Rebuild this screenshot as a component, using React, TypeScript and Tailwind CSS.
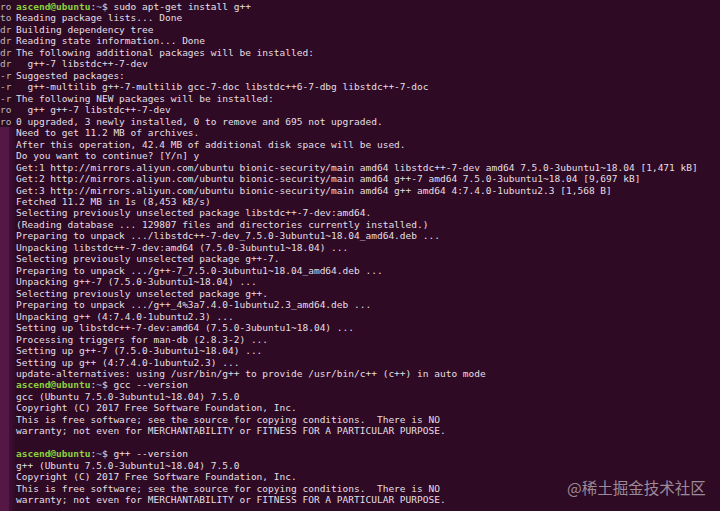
import React from "react";

const lines: string[] = [
  "$P sudo apt-get install g++",
  "Reading package lists... Done",
  "Building dependency tree",
  "Reading state information... Done",
  "The following additional packages will be installed:",
  "  g++-7 libstdc++-7-dev",
  "Suggested packages:",
  "  g++-multilib g++-7-multilib gcc-7-doc libstdc++6-7-dbg libstdc++-7-doc",
  "The following NEW packages will be installed:",
  "  g++ g++-7 libstdc++-7-dev",
  "0 upgraded, 3 newly installed, 0 to remove and 695 not upgraded.",
  "Need to get 11.2 MB of archives.",
  "After this operation, 42.4 MB of additional disk space will be used.",
  "Do you want to continue? [Y/n] y",
  "Get:1 http://mirrors.aliyun.com/ubuntu bionic-security/main amd64 libstdc++-7-dev amd64 7.5.0-3ubuntu1~18.04 [1,471 kB]",
  "Get:2 http://mirrors.aliyun.com/ubuntu bionic-security/main amd64 g++-7 amd64 7.5.0-3ubuntu1~18.04 [9,697 kB]",
  "Get:3 http://mirrors.aliyun.com/ubuntu bionic-security/main amd64 g++ amd64 4:7.4.0-1ubuntu2.3 [1,568 B]",
  "Fetched 11.2 MB in 1s (8,453 kB/s)",
  "Selecting previously unselected package libstdc++-7-dev:amd64.",
  "(Reading database ... 129807 files and directories currently installed.)",
  "Preparing to unpack .../libstdc++-7-dev_7.5.0-3ubuntu1~18.04_amd64.deb ...",
  "Unpacking libstdc++-7-dev:amd64 (7.5.0-3ubuntu1~18.04) ...",
  "Selecting previously unselected package g++-7.",
  "Preparing to unpack .../g++-7_7.5.0-3ubuntu1~18.04_amd64.deb ...",
  "Unpacking g++-7 (7.5.0-3ubuntu1~18.04) ...",
  "Selecting previously unselected package g++.",
  "Preparing to unpack .../g++_4%3a7.4.0-1ubuntu2.3_amd64.deb ...",
  "Unpacking g++ (4:7.4.0-1ubuntu2.3) ...",
  "Setting up libstdc++-7-dev:amd64 (7.5.0-3ubuntu1~18.04) ...",
  "Processing triggers for man-db (2.8.3-2) ...",
  "Setting up g++-7 (7.5.0-3ubuntu1~18.04) ...",
  "Setting up g++ (4:7.4.0-1ubuntu2.3) ...",
  "update-alternatives: using /usr/bin/g++ to provide /usr/bin/c++ (c++) in auto mode",
  "$P gcc --version",
  "gcc (Ubuntu 7.5.0-3ubuntu1~18.04) 7.5.0",
  "Copyright (C) 2017 Free Software Foundation, Inc.",
  "This is free software; see the source for copying conditions.  There is NO",
  "warranty; not even for MERCHANTABILITY or FITNESS FOR A PARTICULAR PURPOSE.",
  "",
  "$P g++ --version",
  "g++ (Ubuntu 7.5.0-3ubuntu1~18.04) 7.5.0",
  "Copyright (C) 2017 Free Software Foundation, Inc.",
  "This is free software; see the source for copying conditions.  There is NO",
  "warranty; not even for MERCHANTABILITY or FITNESS FOR A PARTICULAR PURPOSE.",
];

const side = ["ro", "to", "dr", "dr", "dr", "dr", "-r", "-r", "-r", "ro", "ro"];

function Line({ text }: { text: string }) {
  if (text.startsWith("$P")) {
    return (
      <div className="h-[11.47px] whitespace-pre">
        <span className="text-[#8cd13c] font-bold">ascend@ubuntu</span>
        <span className="text-[#e6e2e4]">:</span>
        <span className="text-[#9fb3d6]">~</span>
        <span className="text-[#e6e2e4]">${text.slice(2)}</span>
      </div>
    );
  }
  return <div className="h-[11.47px] whitespace-pre">{text || " "}</div>;
}

export default function App() {
  return (
    <div
      className="relative w-[720px] h-[511px] overflow-hidden bg-[#2f0a25] flex text-[9.52px] leading-[11.47px] text-[#e4dfe2]"
      style={{ fontFamily: '"DejaVu Sans Mono", "Liberation Mono", monospace' }}
    >
      <div className="w-[16px] flex flex-col shrink-0">
        <div className="pt-[1px] bg-[#2a0b21] text-[#bdb3ba] w-[15px]">
          {side.map((s, i) => (
            <div key={i} className="h-[11.47px] whitespace-pre">
              {s}
            </div>
          ))}
        </div>
        <div className="flex-1 flex">
          <div className="w-[9px] bg-[#551745]" />
          <div className="w-[7px] bg-gradient-to-r from-[#3f1034] to-[#2f0a25]" />
        </div>
      </div>
      <div className="pt-[1px] flex-1 min-w-0">
        {lines.map((l, i) => (
          <Line key={i} text={l} />
        ))}
      </div>
      <div
        className="absolute left-[567px] top-[477px] text-[15.5px] leading-[20px] text-[#9b8a97]"
        style={{ fontFamily: '"Noto Sans CJK SC", "Noto Sans", sans-serif' }}
      >
        @稀土掘金技术社区
      </div>
    </div>
  );
}
